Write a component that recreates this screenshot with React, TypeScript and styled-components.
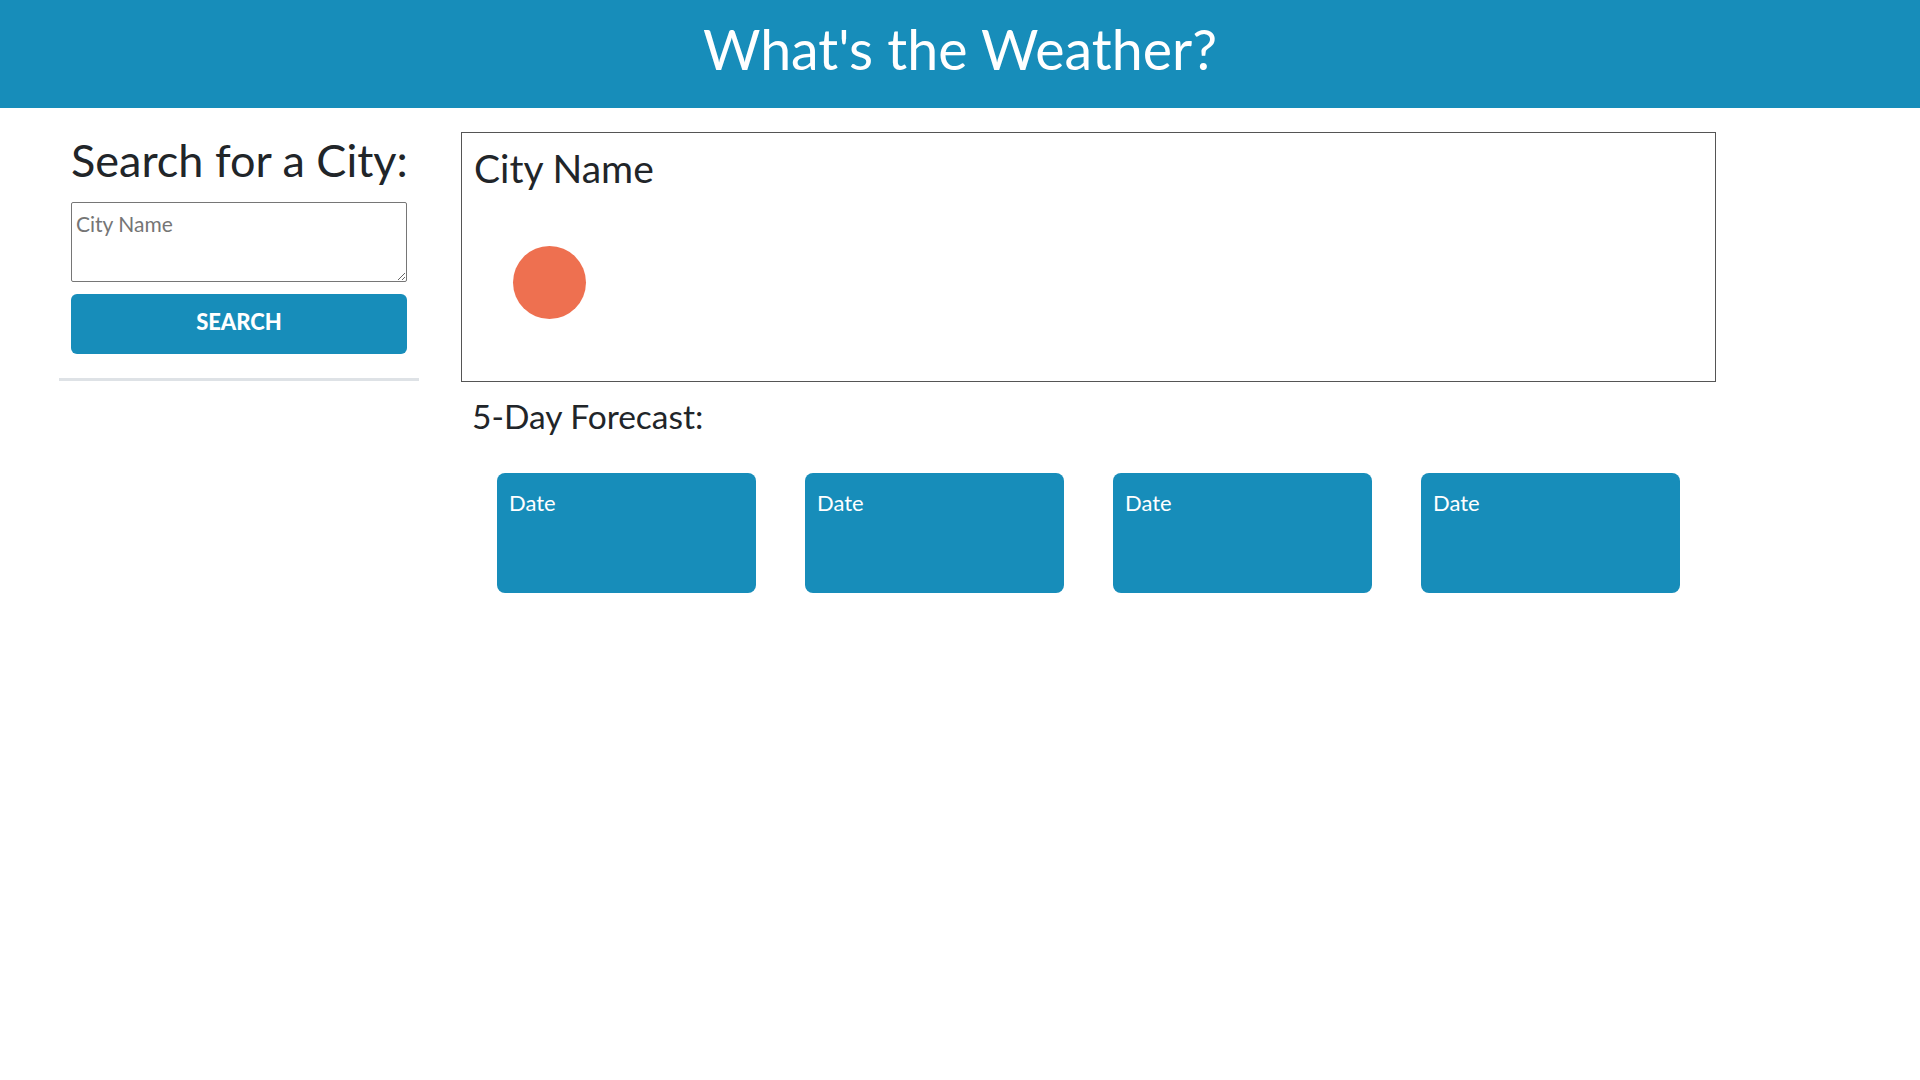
import React from "react";
import styled, { createGlobalStyle } from "styled-components";

const blue = "#178dba";

const GlobalStyle = createGlobalStyle`
  body {
    margin: 0;
    font-family: Lato, "Open Sans", sans-serif;
    color: #212529;
    background: #fff;
  }
  * {
    box-sizing: border-box;
  }
`;

const Header = styled.header`
  height: 108px;
  padding-bottom: 10px;
  display: flex;
  align-items: center;
  justify-content: center;
  background: ${blue};
`;

const Title = styled.h1`
  margin: 0;
  font-size: 55.5px;
  font-weight: 400;
  line-height: 1.2;
  color: #fff;
`;

const Page = styled.div`
  display: grid;
  grid-template-columns: 360px 1255px;
  column-gap: 42px;
  padding: 24px 0 0 59px;
`;

const Sidebar = styled.aside`
  display: flex;
  flex-direction: column;
  padding: 0 12px;
`;

const SideHeading = styled.h2`
  margin: 1px 0 15px;
  font-size: 45px;
  font-weight: 400;
  line-height: 1.2;
  white-space: nowrap;
`;

const CityInput = styled.textarea`
  width: 336px;
  height: 80px;
  padding: 5px 4px;
  border: 1px solid #767676;
  border-radius: 2px;
  font-family: inherit;
  font-size: 21px;
  line-height: 1.5;
  &::placeholder {
    color: #757575;
  }
`;

const SearchButton = styled.button`
  margin-top: 12px;
  height: 60px;
  width: 336px;
  padding: 0 0 5px;
  border: none;
  border-radius: 6px;
  background: ${blue};
  color: #fff;
  font-family: inherit;
  font-size: 22px;
  font-weight: 900;
  text-transform: uppercase;
  cursor: pointer;
`;

const Divider = styled.hr`
  margin: 24px -12px 0;
  height: 3px;
  border: none;
  background: #dee2e6;
`;

const Main = styled.main`
  display: flex;
  flex-direction: column;
`;

const TodayCard = styled.section`
  height: 250px;
  padding: 12px 12px;
  border: 1px solid #555;
`;

const CityTitle = styled.h2`
  margin: 0;
  font-size: 39px;
  font-weight: 400;
  line-height: 1.2;
`;

const WeatherIcon = styled.div`
  width: 73px;
  height: 73px;
  margin: 54px 0 0 39px;
  border-radius: 50%;
  background: #ee7050;
`;

const ForecastHeading = styled.h3`
  margin: 14px 0 0;
  padding-left: 11px;
  font-size: 33.5px;
  font-weight: 400;
  line-height: 1.2;
`;

const ForecastRow = styled.div`
  display: flex;
  justify-content: space-between;
  margin-top: 37px;
  padding: 0 36px;
`;

const DayCard = styled.div`
  width: 259px;
  height: 120px;
  padding: 17px 12px;
  border-radius: 8px;
  background: ${blue};
  color: #fff;
  font-size: 22px;
  line-height: 1.2;
`;

const days = ["Date", "Date", "Date", "Date"];

export default function App() {
  return (
    <>
      <GlobalStyle />
      <Header>
        <Title>What's the Weather?</Title>
      </Header>
      <Page>
        <Sidebar>
          <SideHeading>Search for a City:</SideHeading>
          <CityInput placeholder="City Name" />
          <SearchButton>Search</SearchButton>
          <Divider />
        </Sidebar>
        <Main>
          <TodayCard>
            <CityTitle>City Name</CityTitle>
            <WeatherIcon />
          </TodayCard>
          <ForecastHeading>5-Day Forecast:</ForecastHeading>
          <ForecastRow>
            {days.map((d, i) => (
              <DayCard key={i}>{d}</DayCard>
            ))}
          </ForecastRow>
        </Main>
      </Page>
    </>
  );
}
